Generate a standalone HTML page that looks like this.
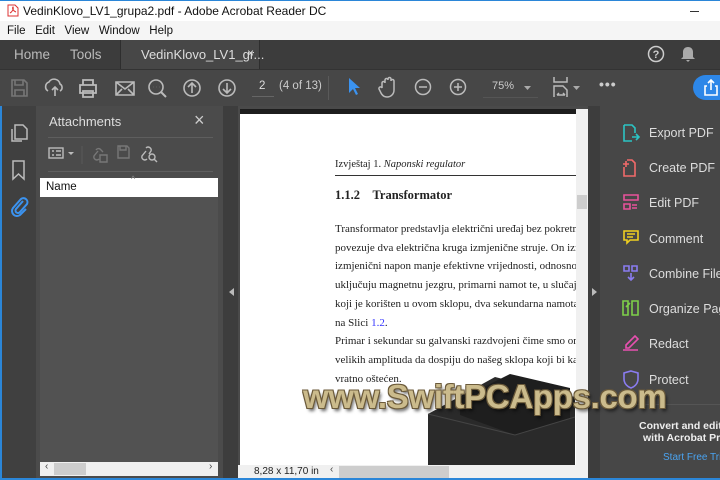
<!DOCTYPE html>
<html><head><meta charset="utf-8"><style>
*{margin:0;padding:0;box-sizing:border-box}
body{width:720px;height:480px;overflow:hidden;position:relative;font-family:"Liberation Sans",sans-serif;background:#4a4a4a}
.a{position:absolute}
svg{position:absolute}
.ser{font-family:"Liberation Serif",serif;font-size:11px;color:#222;white-space:nowrap}
.tool{position:absolute;left:649px;font-size:12.5px;color:#ddd;white-space:nowrap}
</style></head><body>
<div class="a" style="left:0;top:0;width:720px;height:21px;background:#fff;border-top:1px solid #2b86d8"></div>
<svg style="left:7px;top:4px" width="12" height="13"><path d="M1 1h7l3 3v8H1z" fill="#fff" stroke="#d33" stroke-width="1"/><path d="M3 9c2-1 4-4 3-6-1 1 0 4 3 5" fill="none" stroke="#d33"/></svg>
<div class="a" style="left:23px;top:4px;font-size:12px;color:#111">VedinKlovo_LV1_grupa2.pdf - Adobe Acrobat Reader DC</div>
<div class="a" style="left:690px;top:11px;width:9px;height:1px;background:#333"></div>
<div class="a" style="left:0;top:21px;width:720px;height:19px;background:#f5f5f5"></div>
<div class="a" style="left:7px;top:25px;font-size:11.5px;color:#111">File&nbsp;&nbsp;&nbsp;Edit&nbsp;&nbsp;&nbsp;View&nbsp;&nbsp;&nbsp;Window&nbsp;&nbsp;&nbsp;Help</div>
<div class="a" style="left:0;top:40px;width:720px;height:29px;background:#3c3c3c"></div>
<div class="a" style="left:120px;top:40px;width:140px;height:29px;background:#474747;border-left:1px solid #2e2e2e;border-right:1px solid #2e2e2e"></div>
<div class="a" style="left:14px;top:47px;font-size:13.5px;color:#bbb">Home</div>
<div class="a" style="left:70px;top:47px;font-size:13.5px;color:#bbb">Tools</div>
<div class="a" style="left:141px;top:47px;font-size:13px;color:#ddd">VedinKlovo_LV1_gr...</div>
<div class="a" style="left:247px;top:46px;font-size:12px;color:#ddd">×</div>
<svg style="left:647px;top:45px" width="18" height="18"><circle cx="9" cy="9" r="7.5" fill="none" stroke="#ccc" stroke-width="1.5"/><text x="9" y="13" font-size="11" fill="#ccc" text-anchor="middle" font-family="Liberation Sans" font-weight="bold">?</text></svg>
<svg style="left:680px;top:45px" width="16" height="18"><path d="M8 2c-3 0-5 2-5 5v5l-2 2h14l-2-2V7c0-3-2-5-5-5zM6 15h4l-2 2z" fill="#aaa"/></svg>
<div class="a" style="left:0;top:69px;width:720px;height:37px;background:#474747;border-top:1px solid #333"></div>
<svg style="left:10px;top:78px" width="200" height="22" fill="none" stroke="#bbb" stroke-width="1.6">
<path d="M2 2h12l3 3v13H2z M5 2v5h8V2 M5 18v-6h9v6" stroke="#777"/>
<path d="M38 13a5 5 0 0 1 1-9 6 6 0 0 1 11 2 4 4 0 0 1 0 7 M45 18v-9 M42 12l3-3 3 3"/>
<path d="M73 7V2h10v5 M70 7h16v8H70z M73 13h10v6H73z" stroke-width="1.8"/>
<path d="M106 4h18v13h-18z M106 4l9 7 9-7 M106 17l6-6 M124 17l-6-6"/>
<circle cx="146" cy="9" r="7"/><path d="M151 14l5 5 M143 9h.1 M146 9h.1 M149 9h.1" stroke-width="2"/>
<circle cx="182" cy="10" r="8"/><path d="M182 15V6 M178 9l4-4 4 4"/>
</svg>
<svg style="left:216px;top:78px" width="22" height="22" fill="none" stroke="#bbb" stroke-width="1.6"><circle cx="11" cy="10" r="8"/><path d="M11 5v9 M7 11l4 4 4-4"/></svg>
<div class="a" style="left:259px;top:80px;font-size:11.5px;color:#ddd">2</div>
<div class="a" style="left:252px;top:96px;width:22px;height:1px;background:#666"></div>
<div class="a" style="left:279px;top:80px;font-size:11.5px;color:#ccc">(4 of 13)</div>
<div class="a" style="left:328px;top:76px;width:1px;height:24px;background:#5a5a5a"></div>
<svg style="left:347px;top:77px" width="14" height="20"><path d="M2 1v15l4-4 3 6 2-1-3-6h5z" fill="#3b93f0"/></svg>
<svg style="left:378px;top:76px" width="200" height="24" fill="none" stroke="#bbb" stroke-width="1.5">
<path d="M4 12V7a1.5 1.5 0 0 1 3 0V4a1.5 1.5 0 0 1 3 0v-1a1.5 1.5 0 0 1 3 0v2a1.5 1.5 0 0 1 3 0v9c0 4-3 7-7 7-3 0-5-2-6-4l-2-4a1.5 1.5 0 0 1 3-1z"/>
<circle cx="45" cy="11" r="7.5"/><path d="M41 11h8"/>
<circle cx="80" cy="11" r="7.5"/><path d="M76 11h8 M80 7v8"/>
<path d="M176 1v5h13V1 M176 21V10h9l4 4v7 M179 19h8 M179 19l2-2 M187 19l-2-2"/>
</svg>
<div class="a" style="left:492px;top:80px;font-size:11px;color:#ccc">75%</div>
<div class="a" style="left:483px;top:97px;width:55px;height:1px;background:#555"></div>
<svg style="left:524px;top:86px" width="8" height="5"><path d="M0 0h7l-3.5 4z" fill="#aaa"/></svg>
<svg style="left:573px;top:86px" width="8" height="5"><path d="M0 0h7l-3.5 4z" fill="#aaa"/></svg>
<div class="a" style="left:599px;top:76px;font-size:14px;color:#ccc;letter-spacing:1px;font-weight:bold">•••</div>
<div class="a" style="left:693px;top:75px;width:40px;height:25px;border-radius:13px;background:#2d87e8"></div>
<svg style="left:703px;top:78px" width="16" height="18" fill="none" stroke="#fff" stroke-width="1.6"><path d="M4 8H2v9h12V8h-2 M8 12V2 M5 5l3-3 3 3"/></svg>
<div class="a" style="left:0;top:106px;width:36px;height:374px;background:#404040;border-left:2px solid #2b86d8"></div>
<svg style="left:9px;top:121px" width="20" height="110" fill="none" stroke="#bbb" stroke-width="1.5">
<path d="M6 4h8l4 4v10H6z M3 8v12h10"/>
<path d="M4 40h11v18l-5.5-5-5.5 5z"/>
<path d="M14 80l-7 8a2.5 2.5 0 0 0 4 3l7-8a4 4 0 0 0-6-5l-8 9a5 5 0 0 0 7 7l6-6" stroke="#3b93f0" stroke-width="2"/>
</svg>
<div class="a" style="left:36px;top:106px;width:187px;height:374px;background:#4b4b4b"></div>
<div class="a" style="left:49px;top:114px;font-size:13px;color:#ddd">Attachments</div>
<div class="a" style="left:194px;top:110px;font-size:18px;color:#ccc">×</div>
<div class="a" style="left:48px;top:137px;width:165px;height:1px;background:#5e5e5e"></div>
<svg style="left:48px;top:143px" width="115" height="22" fill="none" stroke="#bbb" stroke-width="1.4">
<rect x="1" y="5" width="14" height="10"/><path d="M4 8h2 M8 8h5 M4 12h2 M8 12h5"/><path d="M20 9h6l-3 3z" fill="#bbb" stroke="none"/>
<path d="M34 3v18" stroke="#555"/>
<path d="M50 8l-4 5a3 3 0 0 0 5 3 M55 9l-3-3a3 3 0 0 0-4 1 M52 12h7v7h-7z" stroke="#777"/>
<path d="M70 3h9l2 2v10H70z M72 3v4h6V3" stroke="#777"/>
<path d="M98 8l-4 5a3 3 0 0 0 5 3 M101 11l2-3a3 3 0 0 0-5-3"/><circle cx="104" cy="14" r="3"/><path d="M106 16l3 3"/>
</svg>
<div class="a" style="left:48px;top:171px;width:165px;height:1px;background:#5e5e5e"></div>
<div class="a" style="left:40px;top:178px;width:178px;height:297px;background:#525252"></div>
<div class="a" style="left:40px;top:178px;width:178px;height:19px;background:#fff"></div>
<div class="a" style="left:46px;top:181px;font-size:11.5px;color:#111">Name</div>
<div class="a" style="left:131px;top:174px;font-size:9px;color:#888">^</div>
<div class="a" style="left:40px;top:462px;width:178px;height:14px;background:#f0f0f0"></div>
<div class="a" style="left:54px;top:463px;width:32px;height:12px;background:#cdcdcd"></div>
<div class="a" style="left:45px;top:461px;font-size:10px;color:#444">‹</div>
<div class="a" style="left:209px;top:461px;font-size:10px;color:#444">›</div>
<div class="a" style="left:223px;top:106px;width:15px;height:374px;background:#3d3d3d"></div>
<svg style="left:229px;top:288px" width="5" height="8"><path d="M5 0v8L0 4z" fill="#bbb"/></svg>
<div class="a" style="left:238px;top:106px;width:350px;height:374px;background:#4a4a4a"></div>
<div class="a" style="left:240px;top:109px;width:336px;height:356px;background:#fff;overflow:hidden">
<div class="a" style="left:0;top:0;width:336px;height:5px;background:#1d1d1d"></div>
<div class="ser a" style="left:95px;top:50px;font-size:10.5px">Izvještaj 1. <i>Naponski regulator</i></div>
<div class="a" style="left:95px;top:66px;width:241px;height:1px;background:#333"></div>
<div class="ser a" style="left:95px;top:79px;font-size:12.5px;font-weight:bold">1.1.2&nbsp;&nbsp;&nbsp;&nbsp;Transformator</div>
<div class="ser a" style="left:95px;top:111px;line-height:18.7px">Transformator predstavlja električni uređaj bez pokretni<br>povezuje dva električna kruga izmjenične struje. On izmj<br>izmjenični napon manje efektivne vrijednosti, odnosno ar<br>uključuju magnetnu jezgru, primarni namot te, u slučaj<br>koji je korišten u ovom sklopu, dva sekundarna namota.<br>na Slici <span style="color:#33f">1.2</span>.<br>Primar i sekundar su galvanski razdvojeni čime smo on<br>velikih amplituda da dospiju do našeg sklopa koji bi kao<br>vratno oštećen.</div>
<svg style="left:180px;top:260px" width="160" height="100"><path d="M8 45L75 8l80 20v80H8z" fill="#2a2a2a"/><path d="M40 30L90 5l60 14v30L95 66l-55-20z" fill="#1e1e1e"/><path d="M8 45l87 21 60-18" fill="none" stroke="#444" stroke-width="1"/></svg>
</div>
<div class="a" style="left:576px;top:109px;width:12px;height:356px;background:#f0f0f0"></div>
<div class="a" style="left:577px;top:195px;width:10px;height:14px;background:#cdcdcd"></div>
<div class="a" style="left:238px;top:465px;width:350px;height:14px;background:#f0f0f0"></div>
<div class="a" style="left:254px;top:466px;font-size:10px;color:#222">8,28 x 11,70 in</div>
<div class="a" style="left:339px;top:466px;width:110px;height:12px;background:#cdcdcd"></div>
<div class="a" style="left:330px;top:464px;font-size:10px;color:#444">‹</div>
<div class="a" style="left:588px;top:106px;width:12px;height:374px;background:#3d3d3d"></div>
<svg style="left:592px;top:288px" width="5" height="8"><path d="M0 0v8l5-4z" fill="#bbb"/></svg>
<div class="a" style="left:600px;top:106px;width:120px;height:374px;background:#474747"></div>
<svg style="left:621px;top:123px" width="20" height="270" fill="none" stroke-width="1.6">
<path d="M3 2h8l3 3v5 M3 2v16h8 M11 14h7 M15 11l3 3-3 3" stroke="#2cc4c4"/>
<path d="M6 37h5l3 3v13H3v-9 M2 41h6 M5 38v6" stroke="#f06a6a"/>
<path d="M3 72h14v5H3z M3 81h6v5H3z M11 82h5 M11 85h5" stroke="#e8529c"/>
<path d="M3 108h14v9H9l-3 3v-3H3z M6 111h8 M6 114h6" stroke="#f0d020"/>
<path d="M3 143h5v5H3z M11 143h5v5h-5z M10 150v6 M7 154l3 3 3-3" stroke="#8a7cf0"/>
<path d="M2 178h5v14H2z M11 178h6v14h-6z M9 180l-4 4" stroke="#7ed04a"/>
<path d="M2 227h15 M5 222l9-9 3 3-9 9H5z" stroke="#e850b0"/>
<path d="M10 248l7 2v6c0 5-4 8-7 9-3-1-7-4-7-9v-6z" stroke="#8a7cf0"/>
</svg>
<div class="tool" style="top:126px">Export PDF</div>
<div class="tool" style="top:161px">Create PDF</div>
<div class="tool" style="top:196px">Edit PDF</div>
<div class="tool" style="top:232px">Comment</div>
<div class="tool" style="top:267px">Combine Files</div>
<div class="tool" style="top:302px">Organize Pages</div>
<div class="tool" style="top:337px">Redact</div>
<div class="tool" style="top:373px">Protect</div>
<div class="a" style="left:600px;top:404px;width:120px;height:1px;background:#555"></div>
<div class="a" style="left:639px;top:420px;font-size:10.5px;font-weight:bold;color:#eee;white-space:nowrap">Convert and edit</div>
<div class="a" style="left:643px;top:432px;font-size:10.5px;font-weight:bold;color:#eee;white-space:nowrap">with Acrobat Pro</div>
<div class="a" style="left:663px;top:452px;font-size:10px;color:#4aa3f0;white-space:nowrap">Start Free Trial</div>
<div class="a" style="left:0;top:478px;width:720px;height:2px;background:#2b86d8"></div>
<div class="a" style="left:303px;top:378px;font-size:33px;font-weight:bold;color:#cbbb8c;letter-spacing:-0.3px;white-space:nowrap;text-shadow:-1px -1px 0 #6b5a3a,1px -1px 0 #6b5a3a,-1px 1px 0 #6b5a3a,1px 1px 0 #6b5a3a,2px 3px 3px rgba(0,0,0,.6)">www.SwiftPCApps.com</div>
</body></html>
